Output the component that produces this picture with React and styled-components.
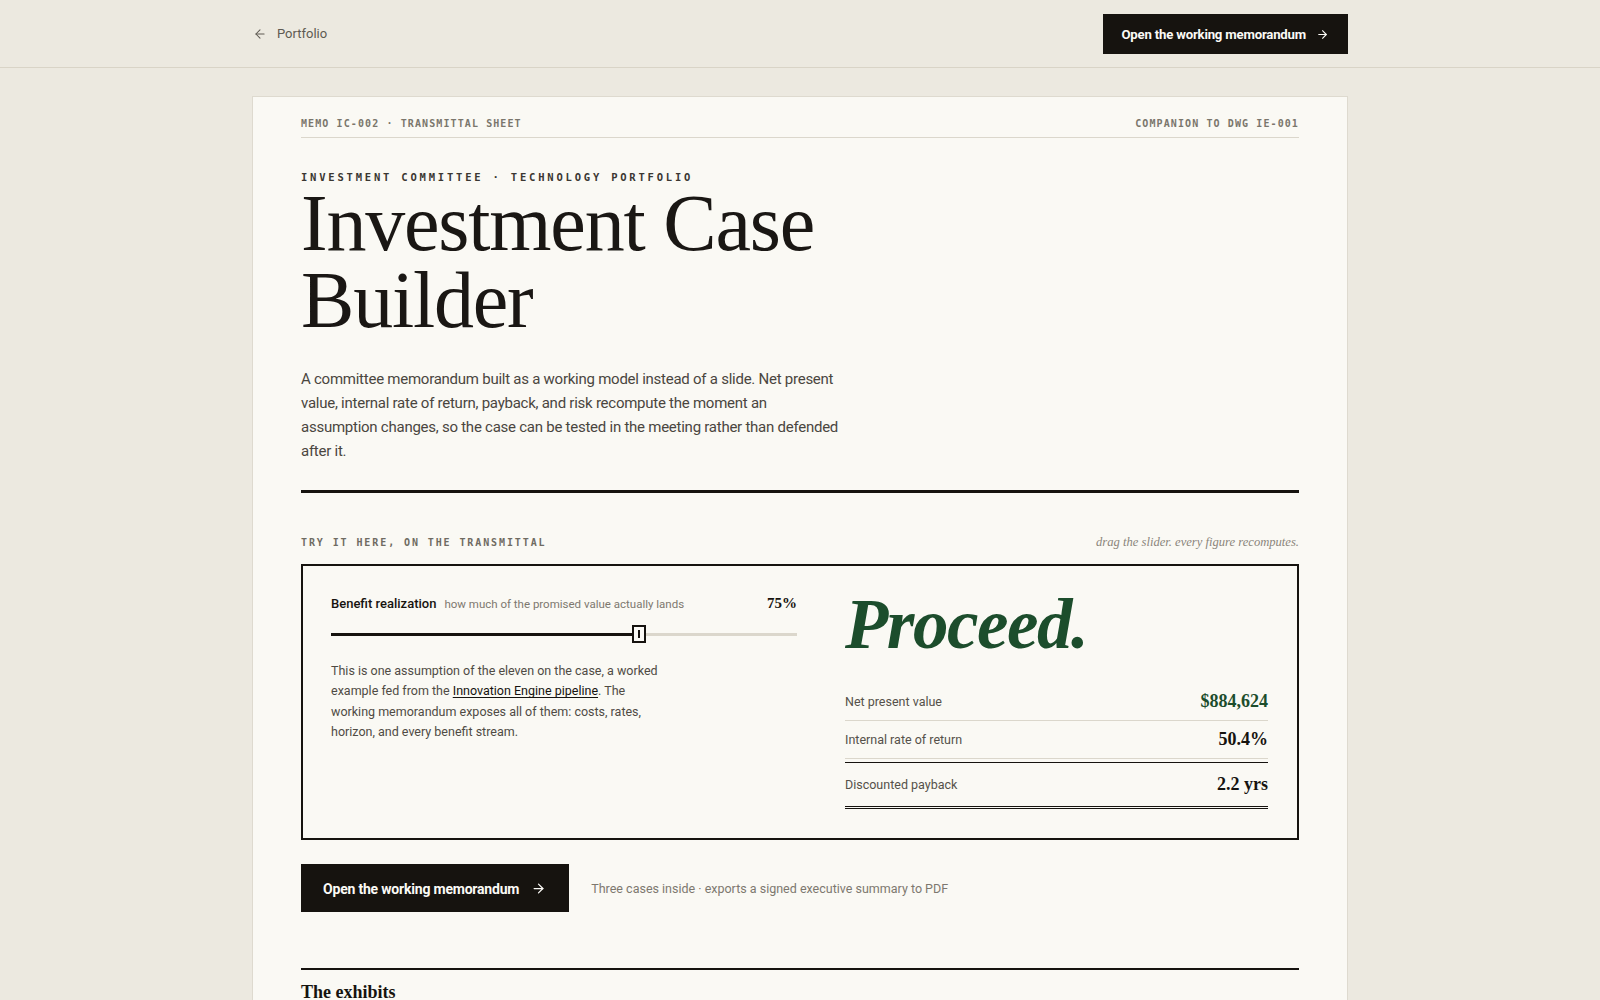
import React, { useState } from "react";
import styled, { createGlobalStyle } from "styled-components";
import { ArrowLeft, ArrowRight } from "lucide-react";

const INK = "#16130f";
const PAGE = "#ece9e0";
const PAPER = "#faf9f4";
const RULE = "#dbd7cc";
const MUTED = "#5e5a52";
const LABEL = "#7a766c";
const GREEN = "#1c4d2c";

const SANS = `Roboto, "Noto Sans", Arial, sans-serif`;
const SERIF = `"Liberation Serif", "Times New Roman", serif`;
const MONO = `"DejaVu Sans Mono", "Liberation Mono", monospace`;

const Global = createGlobalStyle`
  html, body { margin: 0; padding: 0; background: ${PAGE}; }
  body { font-family: ${SANS}; color: ${INK}; -webkit-font-smoothing: antialiased; }
  * { box-sizing: border-box; }
`;

const TopBar = styled.header`
  height: 68px;
  border-bottom: 1px solid #d9d4c7;
  background: ${PAGE};
`;

const TopInner = styled.div`
  width: 1096px;
  height: 100%;
  margin: 0 auto;
  display: flex;
  align-items: center;
  justify-content: space-between;
`;

const BackLink = styled.a`
  display: flex;
  align-items: center;
  gap: 10px;
  font-size: 13px;
  color: ${MUTED};
  text-decoration: none;
  padding-left: 1px;
`;

const DarkButton = styled.a`
  display: inline-flex;
  align-items: center;
  gap: ${(p) => (p.$large ? "12px" : "10px")};
  height: ${(p) => (p.$large ? "48px" : "40px")};
  padding: ${(p) => (p.$large ? "0 23px 0 22px" : "0 19px 0 18px")};
  background: ${INK};
  color: #fbfaf6;
  font-family: ${SANS};
  font-weight: 700;
  font-size: ${(p) => (p.$large ? "14px" : "13.2px")};
  letter-spacing: -0.2px;
  text-decoration: none;
  padding-top: 1px;
`;

const Card = styled.main`
  width: 1096px;
  margin: 28px auto 0;
  background: ${PAPER};
  border: 1px solid #dedacf;
  padding: 20px 48px 60px;
`;

const MemoHead = styled.div`
  display: flex;
  justify-content: space-between;
  align-items: center;
  padding-bottom: 6px;
  border-bottom: 1px solid ${RULE};
`;

const MonoLabel = styled.span`
  font-family: ${MONO};
  font-weight: 700;
  font-size: 10px;
  line-height: 14px;
  letter-spacing: ${(p) => p.$spacing || "1.1px"};
  color: ${(p) => p.$color || LABEL};
  text-transform: uppercase;
`;

const Eyebrow = styled.div`
  margin-top: 32px;
  font-family: ${MONO};
  font-weight: 700;
  font-size: 10.5px;
  line-height: 14px;
  letter-spacing: 2.8px;
  color: #3a3732;
`;

const Title = styled.h1`
  margin: 1px 0 0;
  font-family: ${SERIF};
  font-weight: 400;
  font-size: 80px;
  line-height: 77px;
  letter-spacing: -1.2px;
  color: #1a1714;
`;

const Lede = styled.p`
  margin: 28px 0 0;
  max-width: 541px;
  font-size: 15px;
  line-height: 24px;
  letter-spacing: -0.25px;
  color: #4a463f;
`;

const HeavyRule = styled.hr`
  margin: 27px 0 0;
  border: 0;
  border-top: 3px solid ${INK};
`;

const TryHead = styled.div`
  margin-top: 42px;
  display: flex;
  justify-content: space-between;
  align-items: baseline;
`;

const Aside = styled.span`
  font-family: ${SERIF};
  font-style: italic;
  font-size: 12.6px;
  color: #8a857b;
`;

const Box = styled.section`
  margin-top: 14px;
  border: 2px solid ${INK};
  padding: 26px 29px 29px 28px;
  display: grid;
  grid-template-columns: 466px 1fr;
  column-gap: 48px;
`;

const SliderHead = styled.div`
  display: flex;
  align-items: baseline;
  gap: 8px;
  line-height: 20px;
  padding-top: 1px;
`;

const SliderName = styled.span`
  font-size: 13px;
  font-weight: 500;
  color: ${INK};
`;

const SliderHint = styled.span`
  font-size: 11.5px;
  color: #7d786f;
  flex: 1;
`;

const SliderValue = styled.span`
  font-family: ${SERIF};
  font-weight: 700;
  font-size: 15px;
  color: ${INK};
`;

const Range = styled.input`
  -webkit-appearance: none;
  appearance: none;
  display: block;
  width: 100%;
  height: 20px;
  margin: 10px 0 0;
  background: transparent;
  cursor: pointer;

  &::-webkit-slider-runnable-track {
    height: 3px;
    background: linear-gradient(
      to right,
      ${INK} 0,
      ${INK} var(--fill),
      ${RULE} var(--fill),
      ${RULE} 100%
    );
  }
  &::-webkit-slider-thumb {
    -webkit-appearance: none;
    width: 14px;
    height: 18px;
    margin-top: -7.5px;
    border: 2px solid ${INK};
    background: linear-gradient(${INK}, ${INK}) center / 2px 8px no-repeat, #fbfaf6;
  }
`;

const Note = styled.p`
  margin: 17px 0 0;
  max-width: 340px;
  font-size: 12.5px;
  line-height: 20.3px;
  color: #4f4b44;

  a {
    color: ${INK};
    text-decoration: underline;
    text-underline-offset: 2px;
    text-decoration-thickness: 1px;
  }
`;

const Verdict = styled.div`
  font-family: ${SERIF};
  font-style: italic;
  font-weight: 700;
  font-size: 71px;
  line-height: 64px;
  letter-spacing: -1.5px;
  color: ${GREEN};
`;

const Metrics = styled.dl`
  margin: 27px 0 0;
`;

const Row = styled.div`
  display: flex;
  justify-content: space-between;
  align-items: center;
  height: ${(p) => (p.$total ? "47px" : "38px")};
  border-bottom: ${(p) => (p.$total ? `3px double ${INK}` : `1px solid ${RULE}`)};
  border-top: ${(p) => (p.$total ? `1px solid ${INK}` : "0")};
  margin-top: ${(p) => (p.$total ? "3px" : "0")};
`;

const MetricName = styled.dt`
  font-size: 12.5px;
  color: #55514a;
`;

const MetricValue = styled.dd`
  margin: 0;
  font-family: ${SERIF};
  font-weight: 700;
  font-size: 18px;
  color: ${(p) => (p.$good ? GREEN : INK)};
`;

const CtaRow = styled.div`
  margin-top: 24px;
  display: flex;
  align-items: center;
  gap: 22px;
`;

const CtaNote = styled.span`
  font-size: 12.5px;
  color: #7d786f;
`;

const SectionRule = styled.hr`
  margin: 56px 0 0;
  border: 0;
  border-top: 2px solid ${INK};
`;

const SectionTitle = styled.h2`
  margin: 12px 0 0;
  font-family: ${SERIF};
  font-weight: 700;
  font-size: 18px;
  color: ${INK};
`;

const MIN = 25;
const MAX = 100;

export default function App() {
  const [realization, setRealization] = useState(75);
  const fill = ((realization - MIN) / (MAX - MIN)) * 100;

  return (
    <>
      <Global />
      <TopBar>
        <TopInner>
          <BackLink href="#">
            <ArrowLeft size={14} strokeWidth={1.8} />
            Portfolio
          </BackLink>
          <DarkButton href="#">
            Open the working memorandum
            <ArrowRight size={13} strokeWidth={2} />
          </DarkButton>
        </TopInner>
      </TopBar>

      <Card>
        <MemoHead>
          <MonoLabel>Memo IC-002 · Transmittal sheet</MonoLabel>
          <MonoLabel>Companion to DWG IE-001</MonoLabel>
        </MemoHead>

        <Eyebrow>INVESTMENT COMMITTEE · TECHNOLOGY PORTFOLIO</Eyebrow>
        <Title>
          Investment Case
          <br />
          Builder
        </Title>
        <Lede>
          A committee memorandum built as a working model instead of a slide. Net present
          value, internal rate of return, payback, and risk recompute the moment an
          assumption changes, so the case can be tested in the meeting rather than defended
          after it.
        </Lede>

        <HeavyRule />

        <TryHead>
          <MonoLabel $spacing="1.9px" $color="#6f6b62">
            Try it here, on the transmittal
          </MonoLabel>
          <Aside>drag the slider. every figure recomputes.</Aside>
        </TryHead>

        <Box>
          <div>
            <SliderHead>
              <SliderName>Benefit realization</SliderName>
              <SliderHint>how much of the promised value actually lands</SliderHint>
              <SliderValue>{realization}%</SliderValue>
            </SliderHead>
            <Range
              type="range"
              min={MIN}
              max={MAX}
              value={realization}
              onChange={(e) => setRealization(Number(e.target.value))}
              style={{ "--fill": `${fill}%` }}
            />
            <Note>
              This is one assumption of the eleven on the case, a worked example fed from the{" "}
              <a href="#">Innovation Engine pipeline</a>. The working memorandum exposes all of
              them: costs, rates, horizon, and every benefit stream.
            </Note>
          </div>

          <div>
            <Verdict>Proceed.</Verdict>
            <Metrics>
              <Row>
                <MetricName>Net present value</MetricName>
                <MetricValue $good>$884,624</MetricValue>
              </Row>
              <Row>
                <MetricName>Internal rate of return</MetricName>
                <MetricValue>50.4%</MetricValue>
              </Row>
              <Row $total>
                <MetricName>Discounted payback</MetricName>
                <MetricValue>2.2 yrs</MetricValue>
              </Row>
            </Metrics>
          </div>
        </Box>

        <CtaRow>
          <DarkButton href="#" $large>
            Open the working memorandum
            <ArrowRight size={15} strokeWidth={2} />
          </DarkButton>
          <CtaNote>Three cases inside · exports a signed executive summary to PDF</CtaNote>
        </CtaRow>

        <SectionRule />
        <SectionTitle>The exhibits</SectionTitle>
      </Card>
    </>
  );
}
